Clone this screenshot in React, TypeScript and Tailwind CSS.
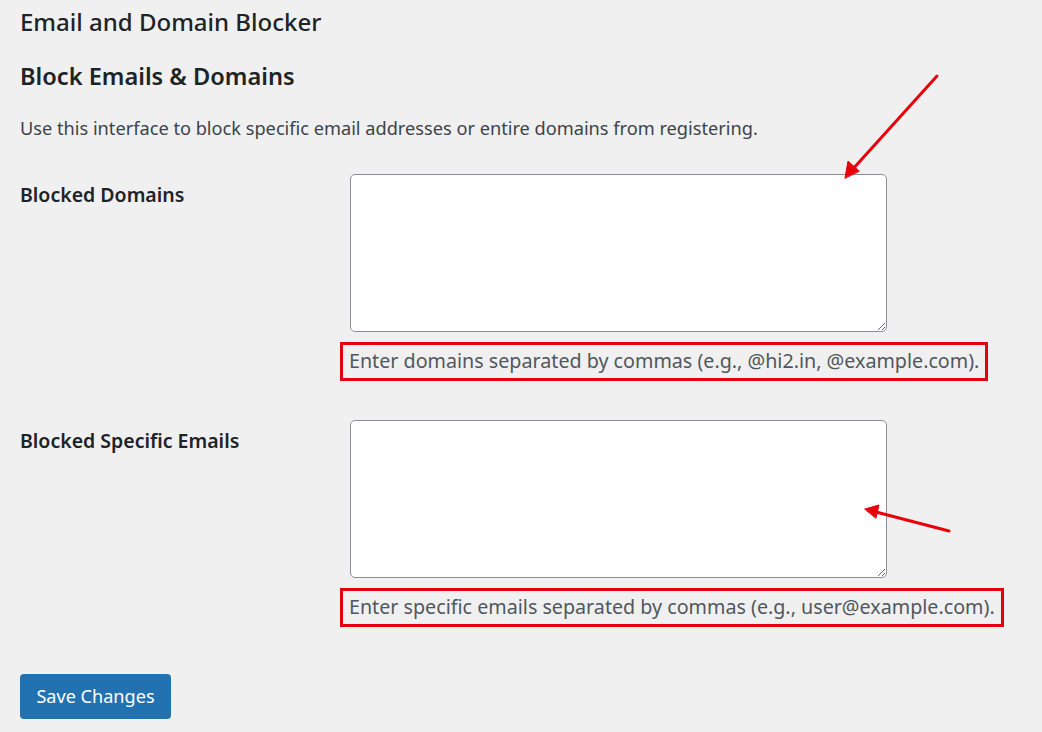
import React from 'react';

const font = { fontFamily: '"Noto Sans", "Open Sans", Arial, sans-serif' };

const Arrows: React.FC = () => (
  <svg className="absolute inset-0 pointer-events-none" width="1042" height="732" viewBox="0 0 1042 732">
    <g stroke="#e8000b" strokeWidth="3" strokeLinecap="round" fill="#e8000b">
      <line x1="937" y1="76" x2="852" y2="170" />
      <polygon points="845,178 848,161 859,171" strokeWidth="1" />
      <line x1="949" y1="531" x2="876" y2="512" />
      <polygon points="865,509 879,505 876,518" strokeWidth="1" />
    </g>
  </svg>
);

const Field: React.FC<{ label: string; hint: string }> = ({ label, hint }) => (
  <div className="grid grid-cols-[330px_1fr]">
    <div className="pt-[8px] text-[19.5px] leading-[26px] font-semibold text-[#1d2327]">{label}</div>
    <div>
      <textarea className="block w-[537px] h-[158px] bg-white border border-[#8c8f94] rounded-[5px] resize" />
      <div className="inline-block mt-[10px] -ml-[10px] h-[39px] pl-[6px] pr-[6px] border-[3px] border-[#e3000f] text-[19.7px] leading-[32px] text-[#50575e] whitespace-nowrap">
        {hint}
      </div>
    </div>
  </div>
);

const App: React.FC = () => {
  return (
    <div className="relative w-[1042px] h-[732px] overflow-hidden bg-[#f0f0f1]" style={font}>
      <div className="px-[20px] pt-[7px]">
        <h1 className="text-[24px] leading-[30px] font-medium text-[#1d2327]">Email and Domain Blocker</h1>
        <h2 className="mt-[24px] text-[23.6px] leading-[30px] font-semibold text-[#1d2327]">Block Emails &amp; Domains</h2>
        <p className="mt-[25px] text-[18.2px] leading-[24px] text-[#3c434a]">
          Use this interface to block specific email addresses or entire domains from registering.
        </p>
        <div className="mt-[34px]">
          <Field label="Blocked Domains" hint="Enter domains separated by commas (e.g., @hi2.in, @example.com)." />
        </div>
        <div className="mt-[39px]">
          <Field label="Blocked Specific Emails" hint="Enter specific emails separated by commas (e.g., user@example.com)." />
        </div>
        <button className="mt-[47px] w-[151px] h-[45px] rounded-[4px] bg-[#2271b1] text-white text-[18.1px]">
          Save Changes
        </button>
      </div>
      <Arrows />
    </div>
  );
};

export default App;
